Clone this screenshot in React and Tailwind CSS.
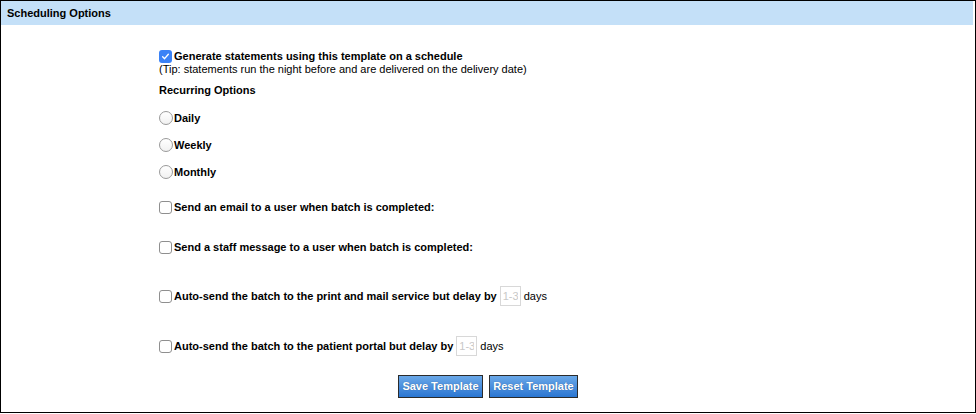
import React from "react";

const Check = ({ checked }) =>
  checked ? (
    <span className="flex h-[13px] w-[13px] shrink-0 items-center justify-center rounded-[3px] bg-[#3b82f6]">
      <svg viewBox="0 0 12 12" className="h-[9px] w-[9px]">
        <path d="M2.2 6.4 L4.8 8.9 L9.8 3" fill="none" stroke="#fff" strokeWidth="1.8" strokeLinecap="round" strokeLinejoin="round" />
      </svg>
    </span>
  ) : (
    <span className="h-[13px] w-[13px] shrink-0 rounded-[3px] border border-[#8f8f8f] bg-white" />
  );

const Radio = () => (
  <span className="h-[14px] w-[14px] shrink-0 rounded-full border border-[#9a9a9a] bg-gradient-to-b from-white to-[#f1f1f1]" />
);

const DaysInput = () => (
  <input
    placeholder="1-3"
    className="mx-[3px] h-[20px] w-[21px] border border-[#d8d8d8] bg-white px-[2px] text-[11px] font-normal text-[#bbb] placeholder:text-[#c8c8c8] outline-none"
  />
);

const Row = ({ children, className = "" }) => (
  <div className={`flex items-center text-[11px] leading-[13px] font-bold text-black ${className}`}>
    {children}
  </div>
);

const Button = ({ label, width }) => (
  <button
    className={`h-[23px] ${width} border border-[#2b2b2b] bg-gradient-to-b from-[#6aa8e8] to-[#2a76d2] text-[11px] font-bold text-white [text-shadow:0_0_1px_rgba(0,0,0,0.35)]`}
  >
    {label}
  </button>
);

export default function App() {
  return (
    <div className="h-[414px] w-[976px] bg-white font-['Liberation_Sans',Arial,sans-serif]">
      <div className="h-[413px] w-[976px] border border-black">
        <div className="mr-[2px] flex h-[24px] items-center bg-[#c4e0f8] pl-[6px] text-[11px] font-bold text-black">
          Scheduling Options
        </div>

        <div className="pl-[158px]">
          <Row className="mt-[25px]">
            <Check checked />
            <span className="ml-[2px]">Generate statements using this template on a schedule</span>
          </Row>
          <div className="text-[11px] leading-[13px] text-black">
            (Tip: statements run the night before and are delivered on the delivery date)
          </div>

          <Row className="mt-[8px]">Recurring Options</Row>

          <Row className="mt-[14px] h-[14px]">
            <Radio />
            <span className="ml-px">Daily</span>
          </Row>
          <Row className="mt-[13px] h-[14px]">
            <Radio />
            <span className="ml-px">Weekly</span>
          </Row>
          <Row className="mt-[13px] h-[14px]">
            <Radio />
            <span className="ml-px">Monthly</span>
          </Row>

          <Row className="mt-[22px]">
            <Check />
            <span className="ml-[2px]">Send an email to a user when batch is completed:</span>
          </Row>
          <Row className="mt-[27px]">
            <Check />
            <span className="ml-[2px]">Send a staff message to a user when batch is completed:</span>
          </Row>

          <Row className="mt-[32px] h-[20px]">
            <Check />
            <span className="ml-[2px]">Auto-send the batch to the print and mail service but delay by</span>
            <DaysInput />
            <span className="font-normal">days</span>
          </Row>
          <Row className="mt-[30px] h-[20px]">
            <Check />
            <span className="ml-[2px]">Auto-send the batch to the patient portal but delay by</span>
            <DaysInput />
            <span className="font-normal">days</span>
          </Row>
        </div>

        <div className="mt-[19px] flex justify-center gap-[6px]">
          <Button label="Save Template" width="w-[85px]" />
          <Button label="Reset Template" width="w-[89px]" />
        </div>
      </div>
    </div>
  );
}
